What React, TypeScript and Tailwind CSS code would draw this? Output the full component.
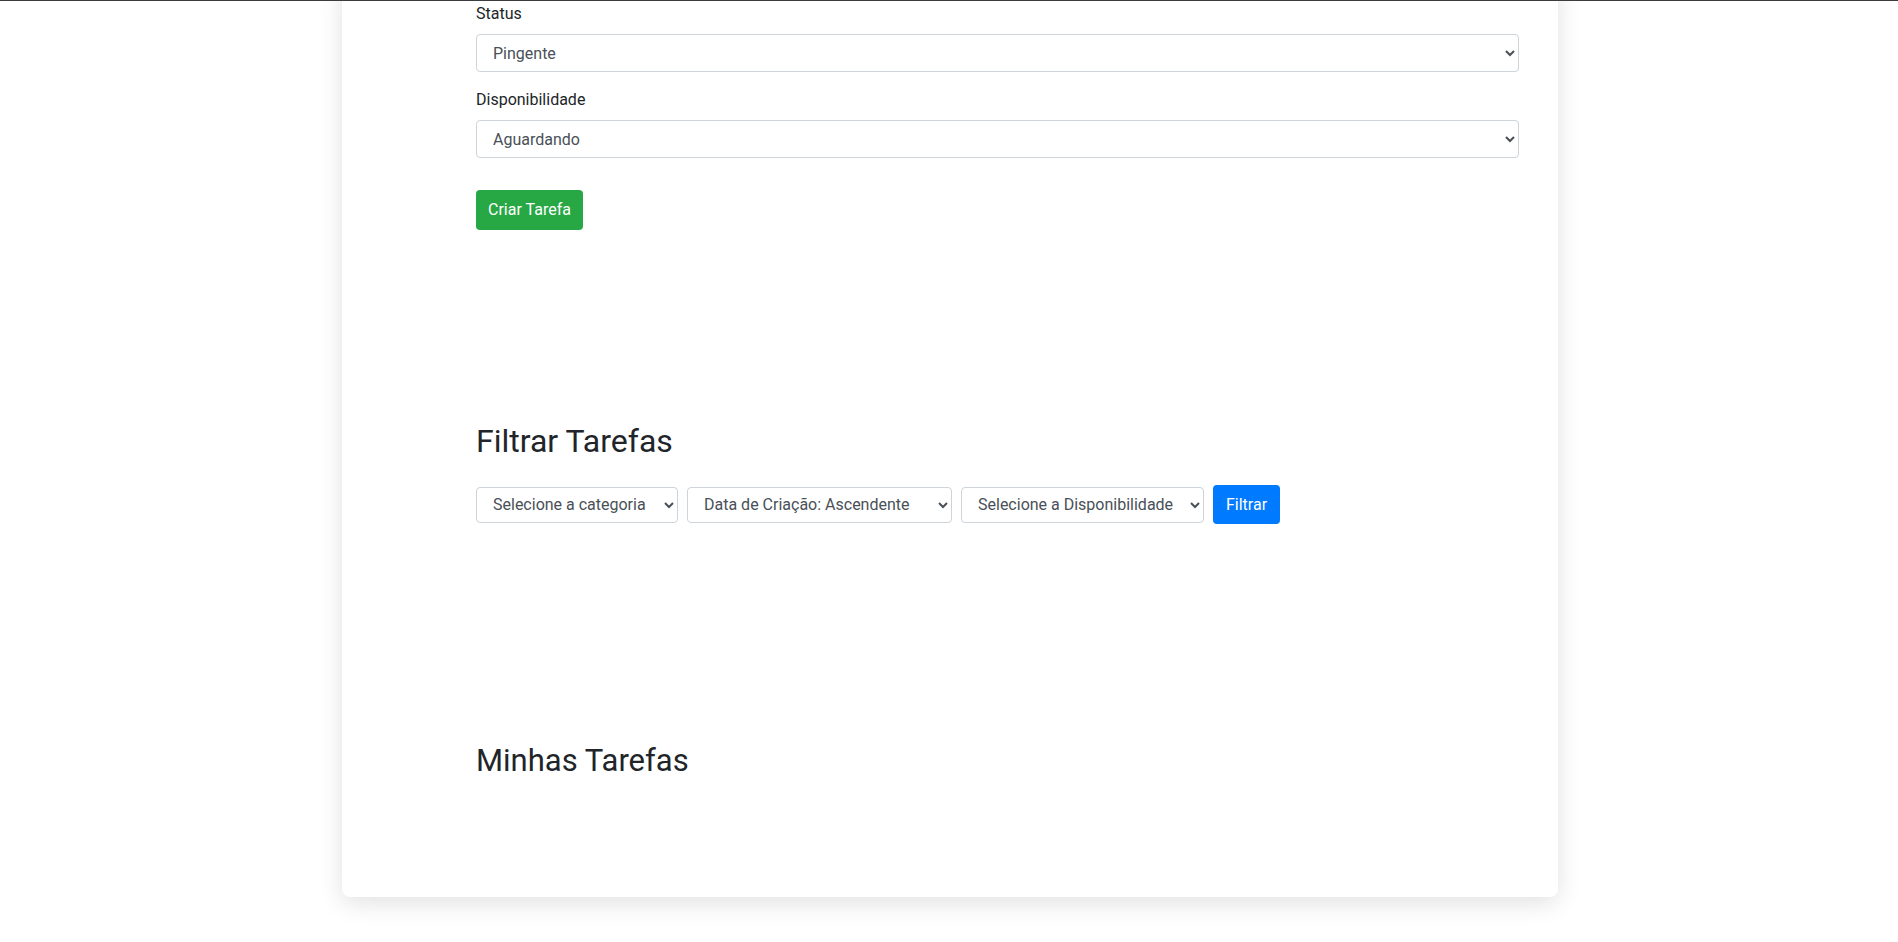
const selectBase =
  'block h-[38px] w-full rounded border border-[#ced4da] bg-white px-3 text-[16px] text-[#495057] outline-none';

const filterSelect =
  'h-[36px] rounded border border-[#ced4da] bg-white px-3 text-[16px] text-[#495057] outline-none';

export default function App() {
  return (
    <div className="min-h-screen overflow-hidden border-t border-[#3c3c3c] bg-white pl-[2px] font-['Roboto',sans-serif] text-[#212529]">
      <div className="mx-auto -mt-[20px] w-[1216px] rounded-lg bg-white pt-[21px] pr-[39px] pb-[117px] pl-[134px] shadow-[0_6px_24px_rgba(0,0,0,0.12)]">
        {/* Nova tarefa */}
        <form onSubmit={(e) => e.preventDefault()}>
          <div className="mb-4">
            <label className="mb-2 block text-[16px] leading-6">Status</label>
            <select className={selectBase} defaultValue="pingente">
              <option value="pingente">Pingente</option>
              <option value="concluida">Concluída</option>
            </select>
          </div>
          <div>
            <label className="mb-2 block text-[16px] leading-6">Disponibilidade</label>
            <select className={selectBase} defaultValue="aguardando">
              <option value="aguardando">Aguardando</option>
              <option value="disponivel">Disponível</option>
            </select>
          </div>
          <button
            type="submit"
            className="mt-8 h-10 rounded bg-[#28a745] px-3 text-[16px] text-white"
          >
            Criar Tarefa
          </button>
        </form>

        {/* Filtros */}
        <h2 className="mt-[192px] text-[32px] leading-[1.2]">Filtrar Tarefas</h2>
        <div className="mt-[25px] flex items-center gap-[9px]">
          <select className={`${filterSelect} w-[202px]`} defaultValue="">
            <option value="">Selecione a categoria</option>
          </select>
          <select className={`${filterSelect} w-[265px]`} defaultValue="asc">
            <option value="asc">Data de Criação: Ascendente</option>
            <option value="desc">Data de Criação: Descendente</option>
          </select>
          <select className={`${filterSelect} w-[243px]`} defaultValue="">
            <option value="">Selecione a Disponibilidade</option>
          </select>
          <button className="h-[39px] w-[67px] rounded bg-[#007bff] text-[16px] text-white">
            Filtrar
          </button>
        </div>

        {/* Lista */}
        <h2 className="mt-[218px] text-[31px] leading-[1.2]">Minhas Tarefas</h2>
      </div>
    </div>
  );
}
